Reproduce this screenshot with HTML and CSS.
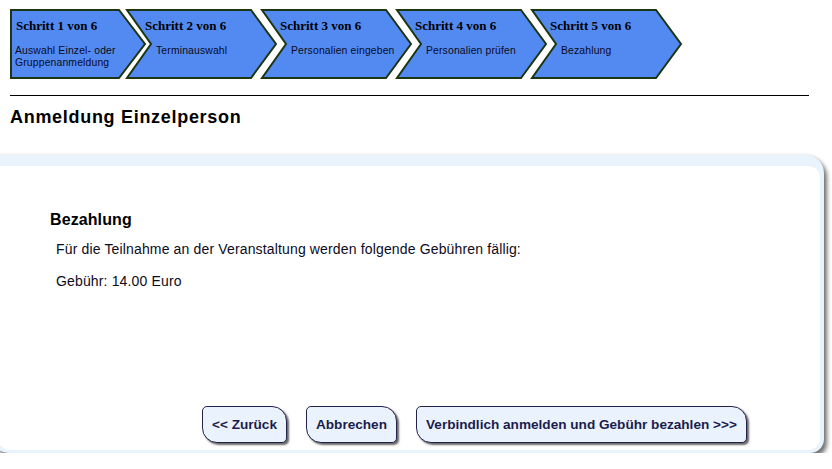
FILE: index.html
```html
<!DOCTYPE html>
<html lang="de">
<head>
    <meta charset="UTF-8">
    <meta name="viewport" content="width=device-width, initial-scale=1.0">
    <title>Anmeldung Einzelperson - Bezahlung</title>
    <link rel="stylesheet" href="styles.css">
</head>
<body>

    <div class="steps">
        <div class="step step-first">
            <svg class="step-shape" width="140" height="72" viewBox="0 0 140 72">
                <polygon points="1,1 109,1 135,35 109,69 1,69" />
            </svg>
            <div class="step-title">Schritt 1 von 6</div>
            <div class="step-text">Auswahl Einzel- oder<br>Gruppenanmeldung</div>
        </div>
        <div class="step">
            <svg class="step-shape" width="154" height="72" viewBox="0 0 154 72">
                <polygon points="1,1 125,1 150,35 125,69 1,69 25,35" />
            </svg>
            <div class="step-title">Schritt 2 von 6</div>
            <div class="step-text">Terminauswahl</div>
        </div>
        <div class="step">
            <svg class="step-shape" width="154" height="72" viewBox="0 0 154 72">
                <polygon points="1,1 125,1 150,35 125,69 1,69 25,35" />
            </svg>
            <div class="step-title">Schritt 3 von 6</div>
            <div class="step-text">Personalien eingeben</div>
        </div>
        <div class="step">
            <svg class="step-shape" width="154" height="72" viewBox="0 0 154 72">
                <polygon points="1,1 125,1 150,35 125,69 1,69 25,35" />
            </svg>
            <div class="step-title">Schritt 4 von 6</div>
            <div class="step-text">Personalien prüfen</div>
        </div>
        <div class="step">
            <svg class="step-shape" width="154" height="72" viewBox="0 0 154 72">
                <polygon points="1,1 125,1 150,35 125,69 1,69 25,35" />
            </svg>
            <div class="step-title">Schritt 5 von 6</div>
            <div class="step-text">Bezahlung</div>
        </div>
    </div>

    <div class="rule"></div>

    <h1 class="page-title">Anmeldung Einzelperson</h1>

    <div class="panel">
        <div class="panel-inner">
            <h2>Bezahlung</h2>
            <p class="first">Für die Teilnahme an der Veranstaltung werden folgende Gebühren fällig:</p>
            <p>Gebühr: 14.00 Euro</p>

            <div class="buttons">
                <button class="btn">&lt;&lt; Zurück</button>
                <button class="btn">Abbrechen</button>
                <button class="btn">Verbindlich anmelden und Gebühr bezahlen &gt;&gt;&gt;</button>
            </div>
        </div>
    </div>

</body>
</html>
```

FILE: styles.css
```css
body {
    margin: 0;
    font-family: "Liberation Sans", Arial, sans-serif;
    color: #000;
    background: #fff;
    overflow: hidden;
}
.steps {
    display: flex;
    padding: 10px 0 0 11px;
    height: 70px;
}
.step {
    position: relative;
    width: 135px;
    height: 70px;
    flex-shrink: 0;
    padding-left: 18px;
    box-sizing: border-box;
}
.step-first {
    width: 116px;
    padding-left: 5px;
}
.step-shape {
    position: absolute;
    left: -1px;
    top: -1px;
    overflow: visible;
}
.step-shape polygon {
    fill: #528af2;
    stroke: #1d3512;
    stroke-width: 2;
    stroke-linejoin: miter;
}
.step-title {
    position: relative;
    padding-top: 8px;
    font-family: "Liberation Serif", "Times New Roman", serif;
    font-weight: bold;
    font-size: 13px;
    line-height: 15px;
    white-space: nowrap;
}
.step-text {
    position: relative;
    margin-top: 12px;
    padding-left: 11px;
    font-size: 10.4px;
    letter-spacing: 0.15px;
    line-height: 12px;
    color: #0a0a22;
    white-space: nowrap;
}
.step-first .step-text {
    padding-left: 0;
    margin-left: -1px;
}
.rule {
    margin: 15px 23px 0 10px;
    border-top: 1px solid #000;
}
.page-title {
    margin: 11px 0 0 10px;
    font-size: 18px;
    letter-spacing: 0.7px;
    line-height: 21px;
}
.panel {
    margin: 27px 0 0 -6px;
    width: 830px;
    box-sizing: border-box;
    padding: 11px 4px 3px 4px;
    background: #e9f3fc;
    border-radius: 6px 18px 14px 14px;
    box-shadow: 3px 4px 4px rgba(0, 0, 0, 0.55), 0 -1px 3px rgba(0, 0, 0, 0.08);
}
.panel-inner {
    display: flex;
    flex-direction: column;
    height: 284px;
    box-sizing: border-box;
    padding: 45px 0 7px 52px;
    background: #fff;
    border-radius: 0 12px 12px 12px;
}
h2 {
    margin: 0;
    font-size: 16px;
    letter-spacing: 0.1px;
    line-height: 18px;
}
p {
    margin: 16px 0 0 6px;
    font-size: 14px;
    letter-spacing: 0.15px;
    line-height: 16px;
    color: #0c0c1c;
}
p.first {
    margin-top: 12px;
}
.buttons {
    display: flex;
    gap: 19px;
    margin-top: auto;
    margin-left: 152px;
}
.btn {
    height: 37px;
    padding: 0 9px;
    border: 1px solid #23234a;
    border-radius: 5px 15px 5px 15px;
    background: #eaf3fd;
    color: #1c1c4c;
    font-family: "Liberation Sans", Arial, sans-serif;
    font-weight: bold;
    font-size: 13.6px;
    box-shadow: 2px 2px 2px rgba(0, 0, 0, 0.6);
    cursor: pointer;
}
```
